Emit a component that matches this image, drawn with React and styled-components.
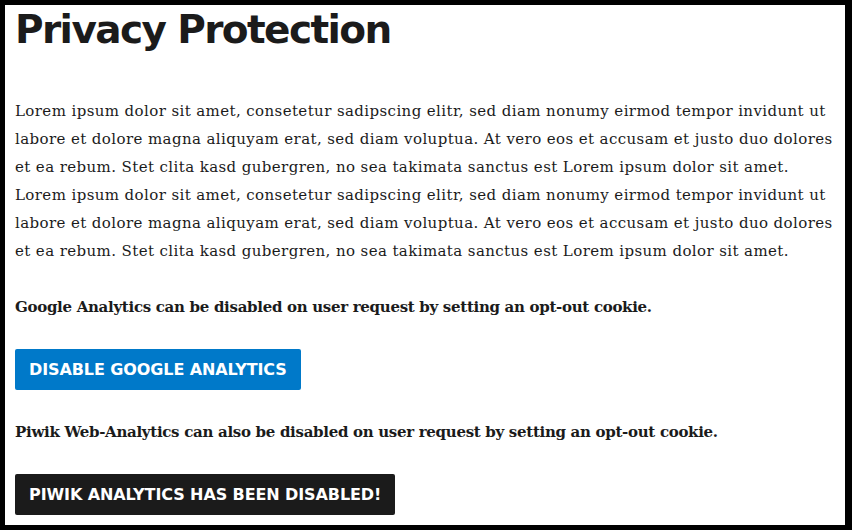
import styled, { createGlobalStyle } from "styled-components";

const GlobalStyle = createGlobalStyle`
  html, body {
    margin: 0;
    padding: 0;
    background: #fff;
  }
`;

const Page = styled.div`
  box-sizing: border-box;
  width: 852px;
  height: 530px;
  border: 5px solid #000;
  border-right-width: 7px;
  padding: 0 10px;
  overflow: hidden;
  color: #1b1b1b;
  font-family: "DejaVu Serif", serif;
`;

const Title = styled.h1`
  margin: 0 0 43px;
  padding-top: 1px;
  font-family: "DejaVu Sans", sans-serif;
  font-size: 39px;
  line-height: 48px;
  font-weight: 700;
  letter-spacing: -1.6px;
`;

const Text = styled.p`
  margin: 0 0 28px;
  font-size: 15px;
  line-height: 28px;
  font-weight: ${(p) => (p.bold ? 700 : 400)};
  letter-spacing: ${(p) => (p.bold ? "-0.3px" : "0.4px")};
`;

const Button = styled.button`
  display: block;
  margin: 0 0 28px;
  height: 41px;
  padding: 0 14px;
  border: none;
  border-radius: 2px;
  background: ${(p) => p.bg};
  color: #fff;
  font-family: "DejaVu Sans", sans-serif;
  font-size: 16px;
  font-weight: 700;
  letter-spacing: -0.1px;
  text-transform: uppercase;
  cursor: pointer;
`;

const lorem =
  "Lorem ipsum dolor sit amet, consetetur sadipscing elitr, sed diam nonumy eirmod tempor invidunt ut labore et dolore magna aliquyam erat, sed diam voluptua. At vero eos et accusam et justo duo dolores et ea rebum. Stet clita kasd gubergren, no sea takimata sanctus est Lorem ipsum dolor sit amet.";

const App = () => {
  return (
    <>
      <GlobalStyle />
      <Page>
        <Title>Privacy Protection</Title>
        <Text>
          {lorem}
          <br />
          {lorem}
        </Text>
        <Text bold>
          Google Analytics can be disabled on user request by setting an opt-out cookie.
        </Text>
        <Button bg="#0079c9">Disable Google Analytics</Button>
        <Text bold>
          Piwik Web-Analytics can also be disabled on user request by setting an opt-out cookie.
        </Text>
        <Button bg="#1b1b1b">Piwik Analytics has been disabled!</Button>
      </Page>
    </>
  );
};

export default App;
